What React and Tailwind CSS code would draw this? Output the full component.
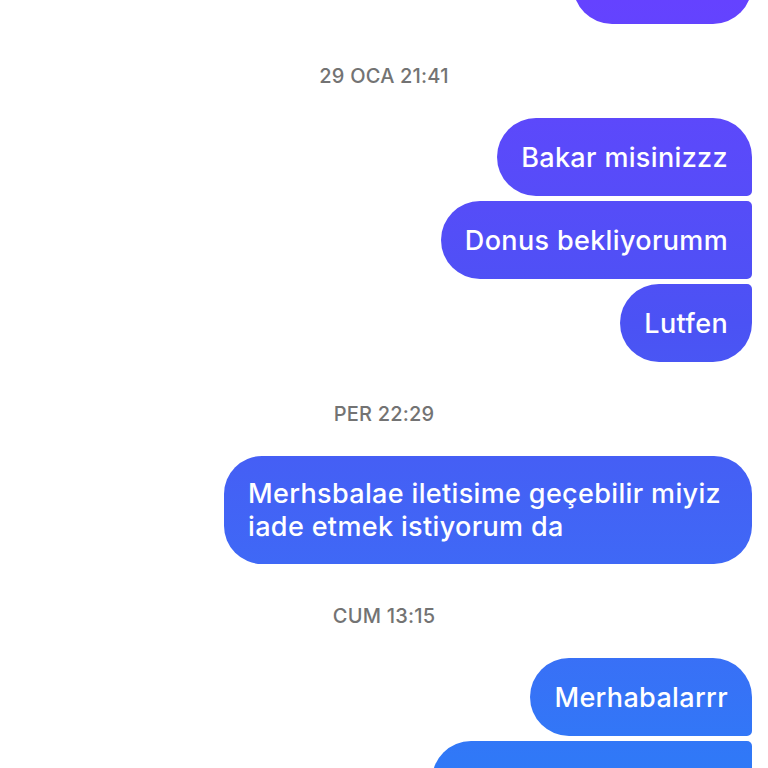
import React from "react";

const bubbleBase =
  "bg-fixed bg-linear-to-b from-[#6542ff] via-[#4b52f4] via-42% to-[#2f79f7] text-white text-[27px] font-medium leading-[33px] tracking-[0.35px] px-6";

function Stamp({ children }) {
  return (
    <div className="mt-10 mb-[30px] text-center text-[20px] font-medium leading-6 tracking-[0.2px] text-[#737373]">
      {children}
    </div>
  );
}

function Bubble({ children, shape, className = "py-[22.5px]" }) {
  return (
    <div className="flex justify-end">
      <div className={`${bubbleBase} ${shape} ${className}`}>{children}</div>
    </div>
  );
}

export default function App() {
  return (
    <div
      className="h-[768px] overflow-hidden bg-white px-4"
      style={{ fontFamily: "Inter, 'Noto Sans', sans-serif" }}
    >
      <div className="-mt-[54px] flex flex-col">
        <Bubble shape="rounded-[39px]" className="h-[78px] w-[179px]" />

        <Stamp>29 OCA 21:41</Stamp>

        <div className="flex flex-col gap-[5px]">
          <Bubble shape="rounded-[39px] rounded-br-[5px]">Bakar misinizzz</Bubble>
          <Bubble shape="rounded-l-[39px] rounded-r-[5px]">Donus bekliyorumm</Bubble>
          <Bubble shape="rounded-[39px] rounded-tr-[5px]">Lutfen</Bubble>
        </div>

        <Stamp>PER 22:29</Stamp>

        <Bubble shape="rounded-[38px]" className="w-[528px] py-[21px]">
          Merhsbalae iletisime geçebilir miyiz iade etmek istiyorum da
        </Bubble>

        <Stamp>CUM 13:15</Stamp>

        <div className="flex flex-col gap-[5px]">
          <Bubble shape="rounded-[39px] rounded-br-[5px]">Merhabalarrr</Bubble>
          <Bubble shape="rounded-l-[39px] rounded-r-[5px]" className="w-[320px] py-[22.5px] whitespace-nowrap">
            Param ne zaman iade edilecek
          </Bubble>
        </div>
      </div>
    </div>
  );
}
